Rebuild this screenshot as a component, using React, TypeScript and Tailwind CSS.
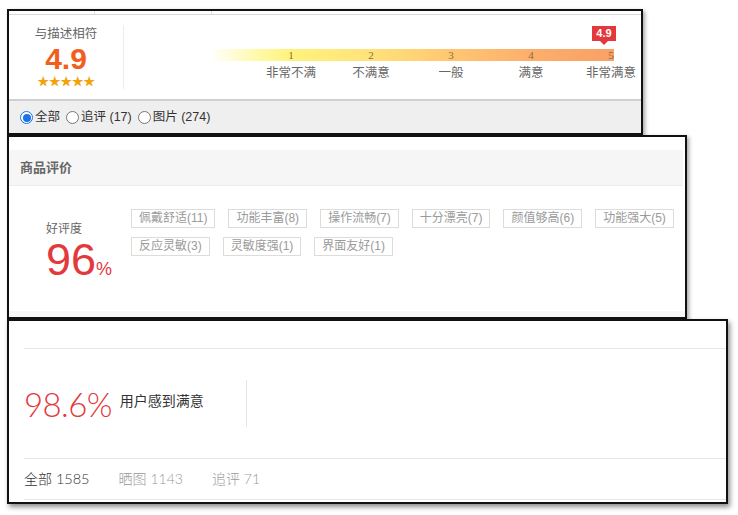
import React from 'react';

const sans = "font-['Liberation_Sans','Noto_Sans_CJK_SC',sans-serif]";

const scale = [
  { n: '1', label: '非常不满' },
  { n: '2', label: '不满意' },
  { n: '3', label: '一般' },
  { n: '4', label: '满意' },
  { n: '5', label: '非常满意' },
];

const tags = [
  '佩戴舒适(11)',
  '功能丰富(8)',
  '操作流畅(7)',
  '十分漂亮(7)',
  '颜值够高(6)',
  '功能强大(5)',
  '反应灵敏(3)',
  '灵敏度强(1)',
  '界面友好(1)',
];

const Radio: React.FC<{ checked?: boolean; label: string }> = ({ checked, label }) => (
  <label className="flex items-center mr-[6px]">
    {checked ? (
      <span className="w-[13px] h-[13px] rounded-full border border-[#1a73e8] bg-white flex items-center justify-center">
        <span className="w-[8px] h-[8px] rounded-full bg-[#1a73e8]" />
      </span>
    ) : (
      <span className="w-[13px] h-[13px] rounded-full border border-[#777] bg-white" />
    )}
    <span className="ml-[2px] text-[12.5px] text-[#333]">{label}</span>
  </label>
);

const ScorePanel: React.FC = () => (
  <div className="w-[636px] h-[126px] border-2 border-[#111] bg-white shadow-[2px_2px_4px_rgba(0,0,0,0.35)] flex flex-col">
    <div className="h-[4px] flex border-b border-[#d8d8d8]">
      <div className="w-[86px] border-r border-[#e2e2e2]" />
      <div className="w-[117px] border-r border-[#e2e2e2]" />
    </div>
    <div className="h-[84px] flex">
      <div className="w-[114px] flex flex-col items-center pt-[10px]">
        <span className="text-[12.5px] text-[#666] leading-[18px]">与描述相符</span>
        <span className="text-[30px] font-bold text-[#f25f1c] leading-[30px] mt-[1px] font-['Liberation_Sans',sans-serif]">4.9</span>
        <span className="text-[12px] text-[#f5a20a] leading-[14px] tracking-[-0.5px] mt-[1px]">★★★★★</span>
      </div>
      <div className="w-px h-[64px] bg-[#ececec] self-center" />
      <div className="flex-1 relative">
        <div className="absolute left-[86px] top-[34px] w-[404px] h-[12px] bg-[linear-gradient(to_right,rgba(255,250,170,0)_0%,#fff9a8_12%,#fff37c_20%,#ffe27a_40%,#ffc672_60%,#fcae6c_80%,#f9a066_100%)]">
          <div className="absolute left-[41px] top-0 w-[400px] grid grid-cols-5">
            {scale.map(s => (
              <div key={s.n} className="flex flex-col items-center">
                <span className="text-[11px] leading-[12px] text-[#8a6d3b] font-['Liberation_Serif',serif]">{s.n}</span>
                <span className="text-[12.5px] leading-[16px] text-[#666] mt-[4px] whitespace-nowrap">{s.label}</span>
              </div>
            ))}
          </div>
          <div className="absolute left-[382px] top-[-23px] flex flex-col items-center">
            <span className="w-[24px] h-[15px] bg-[#e4393c] text-white text-[11px] font-bold leading-[15px] text-center font-['Liberation_Sans',sans-serif]">4.9</span>
            <span className="w-0 h-0 border-x-[4px] border-x-transparent border-t-[4px] border-t-[#e4393c]" />
          </div>
        </div>
      </div>
    </div>
    <div className="flex-1 border-t-2 border-[#d0d0d0] bg-[#efefef] flex items-center pl-[11px] pt-[1px]">
      <Radio checked label="全部" />
      <Radio label="追评 (17)" />
      <Radio label="图片 (274)" />
    </div>
  </div>
);

const TagPanel: React.FC = () => (
  <div className="w-[680px] h-[184px] border-2 border-[#111] bg-white shadow-[2px_2px_4px_rgba(0,0,0,0.35)] flex flex-col">
    <div className="mt-[13px] mr-[2px] h-[36px] bg-[#f6f6f6] border-b border-[#ededed] flex items-center pl-[11px]">
      <span className="text-[13px] font-bold text-[#666]">商品评价</span>
    </div>
    <div className="flex-1 flex border-b-[6px] border-[#f7f7f7]">
      <div className="w-[122px] pl-[37px] pt-[35px] flex flex-col">
        <span className="text-[12px] text-[#666] leading-[16px]">好评度</span>
        <span className="text-[#e4393c] leading-[36px] mt-[5px] font-['Liberation_Sans',sans-serif]">
          <span className="text-[45px]">96</span>
          <span className="text-[18px]">%</span>
        </span>
      </div>
      <div className="w-[550px] pt-[23px] flex flex-wrap content-start gap-x-[13px] gap-y-[9px]">
        {tags.map(t => (
          <span key={t} className="h-[19px] px-[7px] border border-[#dcdcdc] text-[12px] leading-[17px] text-[#9a9a9a]">
            {t}
          </span>
        ))}
      </div>
    </div>
  </div>
);

const SummaryPanel: React.FC = () => (
  <div className="w-[721px] h-[185px] border-2 border-[#111] bg-white shadow-[2px_3px_5px_rgba(0,0,0,0.45)] flex flex-col">
    <div className="mt-[27px] ml-[15px] flex flex-col">
      <div className="h-[110px] border-t border-[#e6e6e6] flex items-center">
        <span className="text-[33px] font-light text-[#e4393c] leading-[40px] tracking-[-0.6px] font-['Lato',sans-serif]">98.6%</span>
        <span className="ml-[8px] text-[14px] text-[#333] mt-[-4px]">用户感到满意</span>
        <div className="ml-[42px] w-px h-[47px] bg-[#e6e6e6]" />
      </div>
      <div className="h-[42px] border-y border-[#e6e6e6] flex items-center text-[14px] font-light">
        <span className="text-[#333]">全部 <span className="text-[14.5px] font-['Lato',sans-serif]">1585</span></span>
        <span className="ml-[29px] text-[#9a9a9a]">晒图 <span className="font-['Lato',sans-serif]">1143</span></span>
        <span className="ml-[29px] text-[#9a9a9a]">追评 <span className="font-['Lato',sans-serif]">71</span></span>
      </div>
    </div>
  </div>
);

export default function App() {
  return (
    <div className={`w-[738px] h-[515px] bg-white pt-[9px] pl-[7px] overflow-hidden ${sans}`}>
      <ScorePanel />
      <TagPanel />
      <SummaryPanel />
    </div>
  );
}
